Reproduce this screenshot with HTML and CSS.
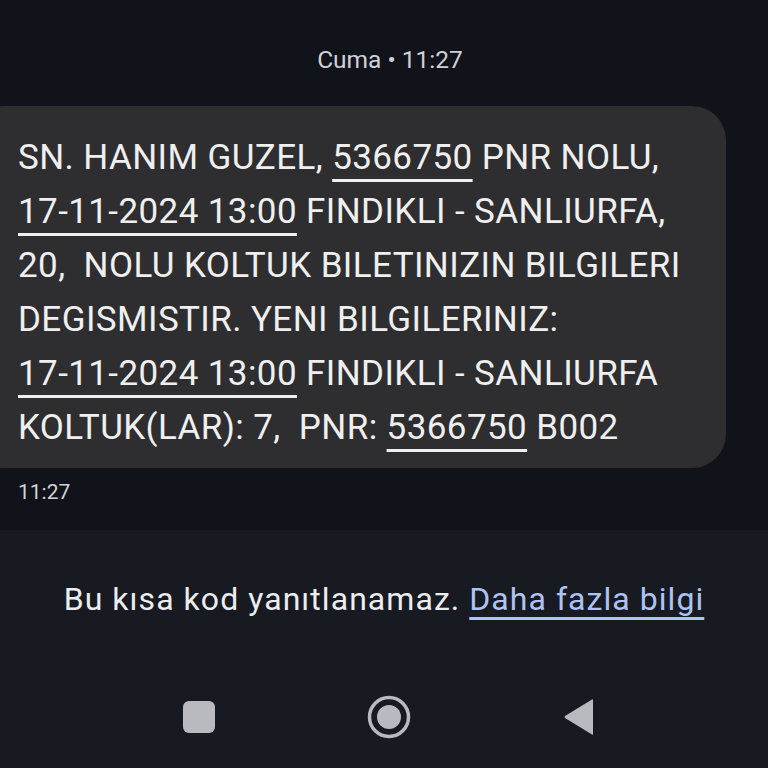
FILE: index.html
```html
<!DOCTYPE html>
<html lang="tr">
<head>
    <meta charset="UTF-8">
    <meta name="viewport" content="width=device-width, initial-scale=1.0">
    <title>Mesaj</title>
    <link rel="stylesheet" href="styles.css">
</head>
<body>
    <div class="thread">
        <div class="day">Cuma • 11:27</div>
        <div class="bubble">
            <p class="msg">SN. HANIM GUZEL, <u>5366750</u> PNR NOLU,<br><u>17-11-2024 13:00</u> FINDIKLI - SANLIURFA,<br>20,  NOLU KOLTUK BILETINIZIN BILGILERI<br>DEGISMISTIR. YENI BILGILERINIZ:<br><u>17-11-2024 13:00</u> FINDIKLI - SANLIURFA<br>KOLTUK(LAR): 7,  PNR: <u>5366750</u> B002</p>
        </div>
        <div class="time">11:27</div>
    </div>

    <div class="footer">
        <p class="notice">Bu kısa kod yanıtlanamaz. <a href="#">Daha fazla bilgi</a></p>
        <nav class="navbar">
            <svg width="34" height="34" viewBox="0 0 34 34"><rect x="1" y="1" width="32" height="32" rx="6" fill="#b9babf"/></svg>
            <svg width="46" height="46" viewBox="0 0 46 46"><circle cx="23" cy="23" r="19.5" fill="none" stroke="#b9babf" stroke-width="3.5"/><circle cx="23" cy="23" r="12" fill="#b9babf"/></svg>
            <svg width="34" height="38" viewBox="0 0 34 38"><path d="M31 2 L31 36 Q31 37 30 36.5 L3 20 Q2 19 3 18 L30 1.5 Q31 1 31 2 Z" fill="#b9babf"/></svg>
        </nav>
    </div>
</body>
</html>
```

FILE: styles.css
```css
/* Conversation screen */
body {
    margin: 0;
    padding: 0;
    font-family: 'Roboto', sans-serif;
    background: #11131a;
    color: #ececee;
    height: 100vh;
    overflow: hidden;
    display: flex;
    flex-direction: column;
}

.thread {
    padding: 45px 0 0;
    height: 484px;
    box-sizing: border-box;
}

.day {
    text-align: center;
    font-size: 24.5px;
    color: #cfd1d6;
    padding-left: 12px;
}

.bubble {
    background: #2e2e30;
    border-radius: 34px;
    margin: 32px 0 0 -30px;
    width: 756px;
    padding: 25px 0 13px 48px;
    box-sizing: border-box;
}

.msg {
    margin: 0;
    font-size: 35px;
    line-height: 54px;
    letter-spacing: 0.4px;
    white-space: pre-wrap;
    color: #efefef;
}

.msg u {
    text-decoration-thickness: 2.5px;
    text-underline-offset: 10px;
}

.time {
    font-size: 21px;
    color: #d2d3d7;
    margin: 12px 0 0 18px;
}

.footer {
    flex: 1;
    background: #181a21;
    margin-top: 46px;
    display: flex;
    flex-direction: column;
    align-items: center;
}

.notice {
    margin: 50px 0 0;
    font-size: 32px;
    letter-spacing: 1.05px;
    color: #ecedef;
}

.notice a {
    color: #aec3f4;
    text-decoration-thickness: 2.5px;
    text-underline-offset: 7px;
}

.navbar {
    display: flex;
    align-items: center;
    justify-content: space-between;
    width: 414px;
    margin: 76px 0 0 10px;
}
```
